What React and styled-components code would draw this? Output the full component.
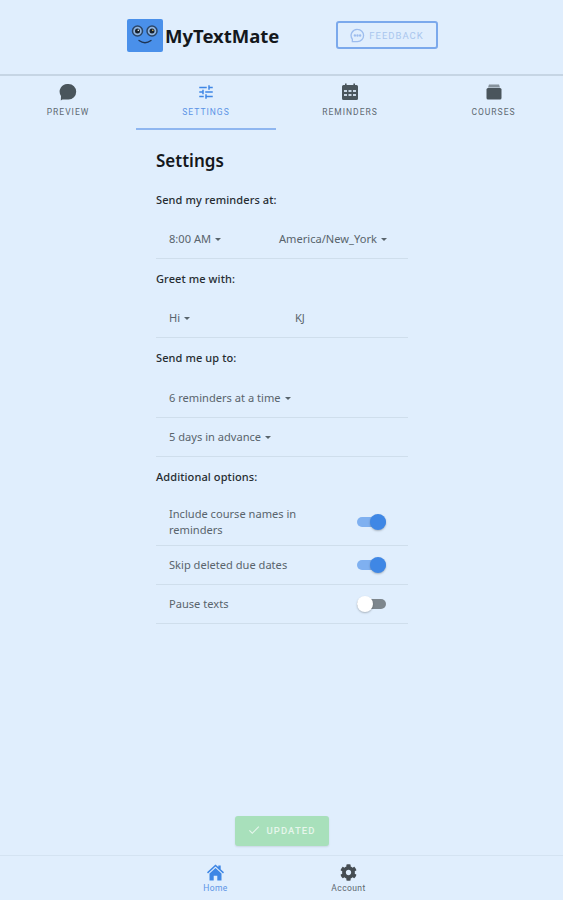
import styled, { createGlobalStyle } from "styled-components";
import { FaCog } from "react-icons/fa";
import { MdCheck, MdTune } from "react-icons/md";

const GlobalStyle = createGlobalStyle`
  * {
    box-sizing: border-box;
  }
  body {
    margin: 0;
    background: #e0eefd;
    font-family: "Noto Sans", sans-serif;
  }
`;

const Page = styled.div`
  min-height: 900px;
  display: flex;
  flex-direction: column;
  background: #e0eefd;
`;

const Header = styled.header`
  height: 76px;
  display: flex;
  align-items: center;
  padding: 0 0 4px 127px;
  border-bottom: 2px solid #c6d5e4;
`;

const Brand = styled.div`
  display: flex;
  align-items: center;
  gap: 2px;
  width: 209px;
`;

const BrandName = styled.span`
  font-family: "Noto Sans", sans-serif;
  font-size: 18.5px;
  font-weight: 700;
  color: #14181c;
`;

const FeedbackButton = styled.button`
  width: 102px;
  height: 28px;
  display: flex;
  align-items: center;
  justify-content: center;
  gap: 4px;
  padding: 0;
  background: transparent;
  border: 2px solid #7ba9ec;
  border-radius: 3px;
  color: #a9c6ee;
  font-family: "Roboto", sans-serif;
  font-size: 9.5px;
  font-weight: 400;
  letter-spacing: 1px;
`;

const Tabs = styled.nav`
  display: grid;
  grid-template-columns: 136px 140px 148px 139px;
  height: 54px;
`;

const Tab = styled.div`
  display: flex;
  flex-direction: column;
  align-items: center;
  padding-top: 7px;
  gap: 5px;
  color: ${(p) => (p.$active ? "#5b93e6" : "#5d6870")};
  border-bottom: 2px solid ${(p) => (p.$active ? "#8fb6f0" : "transparent")};
  svg {
    color: ${(p) => (p.$active ? "#3f87e5" : "#4a555c")};
  }
`;

const TabLabel = styled.span`
  font-family: "Roboto", sans-serif;
  font-size: 8.5px;
  font-weight: 400;
  letter-spacing: 1px;
  line-height: 12px;
`;

const Main = styled.main`
  flex: 1;
  width: 252px;
  margin-left: 156px;
  padding-top: 18px;
`;

const Title = styled.h1`
  margin: 0;
  height: 32px;
  font-size: 17px;
  line-height: 26px;
  font-weight: 600;
  color: #14181c;
`;

const SectionLabel = styled.div`
  height: ${(p) => p.$height || "40px"};
  display: flex;
  align-items: center;
  padding-bottom: 2px;
  font-size: 11px;
  font-weight: 500;
  letter-spacing: 0.1px;
  color: #262c31;
`;

const Row = styled.div`
  min-height: 39px;
  display: flex;
  align-items: center;
  padding: ${(p) => (p.$tall ? "9px 0 7px 13px" : "0 0 0 13px")};
  border-bottom: 1px solid #cfdeec;
  font-size: 11.1px;
  line-height: 16px;
  color: #59646c;
`;

const Select = styled.span`
  display: inline-flex;
  align-items: center;
  gap: 4px;
  width: ${(p) => p.$width || "auto"};
  &::after {
    content: "";
    border-left: 3.5px solid transparent;
    border-right: 3.5px solid transparent;
    border-top: 3.5px solid #59646c;
  }
`;

const OptionText = styled.span`
  flex: 1;
  padding-right: 40px;
`;

const SwitchTrack = styled.span`
  position: relative;
  width: 29px;
  height: 10px;
  margin-right: 22px;
  flex-shrink: 0;
  border-radius: 5px;
  background: ${(p) => (p.$on ? "#7fb0f0" : "#7d868d")};
`;

const SwitchThumb = styled.span`
  position: absolute;
  top: -3px;
  left: ${(p) => (p.$on ? "13px" : "0")};
  width: 16px;
  height: 16px;
  border-radius: 50%;
  background: ${(p) => (p.$on ? "#3f87e5" : "#ffffff")};
  box-shadow: 0 1px 2px rgba(0, 0, 0, 0.25);
`;

const SaveBar = styled.div`
  display: flex;
  justify-content: center;
  padding-bottom: 9px;
`;

const UpdatedButton = styled.button`
  width: 94px;
  height: 30px;
  display: flex;
  align-items: center;
  justify-content: center;
  gap: 5px;
  padding: 0 0 2px;
  border: none;
  border-radius: 3px;
  background: #a8e0bb;
  color: #e6f6ec;
  font-family: "Roboto", sans-serif;
  font-size: 9.5px;
  font-weight: 500;
  letter-spacing: 1.1px;
  box-shadow: 0 1px 2px rgba(0, 0, 0, 0.1);
`;

const BottomNav = styled.nav`
  height: 45px;
  display: grid;
  grid-template-columns: 133px 133px;
  padding-left: 149px;
  border-top: 1px solid #d4e3f2;
`;

const BottomItem = styled.div`
  display: flex;
  flex-direction: column;
  align-items: center;
  padding-top: 8px;
  color: ${(p) => (p.$active ? "#5b93e6" : "#5d6870")};
  svg {
    height: 17px;
    color: ${(p) => (p.$active ? "#3f87e5" : "#454c52")};
  }
`;

const BottomLabel = styled.span`
  font-family: "Roboto", sans-serif;
  font-size: 8.5px;
  font-weight: 400;
  letter-spacing: 0.4px;
  line-height: 12px;
  margin-top: 1px;
`;

const Logo = () => (
  <svg width="36" height="33" viewBox="0 0 36 33">
    <rect width="36" height="33" rx="2" fill="#4a90ea" />
    <circle cx="10.500" cy="12" r="5" fill="#8fb4e0" stroke="#2b4668" strokeWidth="1.500" />
    <circle cx="25" cy="12" r="5" fill="#8fb4e0" stroke="#2b4668" strokeWidth="1.500" />
    <circle cx="10.500" cy="12" r="2.500" fill="#16202c" />
    <circle cx="25" cy="12" r="2.500" fill="#16202c" />
    <circle cx="11.300" cy="11.200" r=".8" fill="#fff" />
    <circle cx="25.800" cy="11.200" r=".8" fill="#e8c060" />
    <path d="M12 21.500q6 4.500 12 0" fill="none" stroke="#1e3554" strokeWidth="1.300" strokeLinecap="round" />
  </svg>
);

const FeedbackIcon = () => (
  <svg width="15" height="15" viewBox="0 0 16 16" fill="none" stroke="#9dbdee" strokeWidth="1.400">
    <path d="M8 1.500a6.500 6.500 0 1 1 0 13H2.500v-2.600A6.500 6.500 0 0 1 8 1.500z" />
    <circle cx="5.200" cy="8" r=".6" fill="#9dbdee" />
    <circle cx="8" cy="8" r=".6" fill="#9dbdee" />
    <circle cx="10.800" cy="8" r=".6" fill="#9dbdee" />
  </svg>
);

const ChatIcon = () => (
  <svg width="18" height="18" viewBox="0 0 18 18" fill="currentColor">
    <path d="M9.500 1a7.700 7.700 0 0 1 0 15.400H3.400L1.800 17.500l.2-4.600A7.700 7.700 0 0 1 9.500 1z" />
  </svg>
);

const CalendarIcon = () => (
  <svg width="18" height="18" viewBox="0 0 18 18">
    <path fill="currentColor" d="M1 3.500A1.500 1.500 0 0 1 2.500 2H4V.6h1.600V2h6.800V.6H14V2h1.500A1.500 1.500 0 0 1 17 3.500v12a1.500 1.500 0 0 1-1.500 1.500h-13A1.500 1.500 0 0 1 1 15.500z" />
    <path fill="#e0eefd" opacity=".85" d="M3 7h3v2H3zM7.500 7h3v2h-3zM12 7h3v2h-3zM3 11h3v2H3zM7.500 11h3v2h-3zM12 11h3v2h-3z" />
  </svg>
);

const CoursesIcon = () => (
  <svg width="18" height="18" viewBox="0 0 18 18" fill="currentColor">
    <path opacity=".6" d="M4 1.500h10l1 3H3z" />
    <rect x="1.500" y="5" width="15" height="11.500" rx="1.500" />
  </svg>
);

const HomeIcon = () => (
  <svg width="17" height="17" viewBox="0 0 17 17" fill="currentColor">
    <path d="M8.500.5l2.800 2.500V1.500h2.400v3.700L17 8.300l-1 1.100-7.500-6.800L1 9.400 0 8.300z" />
    <path d="M2.500 9.500l6-5.400 6 5.400v7h-4.200v-4.800H6.700v4.800H2.500z" />
  </svg>
);

const Toggle = ({ on }) => (
  <SwitchTrack $on={on}>
    <SwitchThumb $on={on} />
  </SwitchTrack>
);

const App = () => {
  return (
    <Page>
      <GlobalStyle />
      <Header>
        <Brand>
          <Logo />
          <BrandName>MyTextMate</BrandName>
        </Brand>
        <FeedbackButton>
          <FeedbackIcon />
          FEEDBACK
        </FeedbackButton>
      </Header>
      <Tabs>
        <Tab>
          <ChatIcon />
          <TabLabel>PREVIEW</TabLabel>
        </Tab>
        <Tab $active>
          <MdTune size={18} />
          <TabLabel>SETTINGS</TabLabel>
        </Tab>
        <Tab>
          <CalendarIcon />
          <TabLabel>REMINDERS</TabLabel>
        </Tab>
        <Tab>
          <CoursesIcon />
          <TabLabel>COURSES</TabLabel>
        </Tab>
      </Tabs>
      <Main>
        <Title>Settings</Title>
        <SectionLabel>Send my reminders at:</SectionLabel>
        <Row>
          <Select $width="110px">8:00 AM</Select>
          <Select>America/New_York</Select>
        </Row>
        <SectionLabel>Greet me with:</SectionLabel>
        <Row>
          <Select $width="126px">Hi</Select>
          <span>KJ</span>
        </Row>
        <SectionLabel $height="41px">Send me up to:</SectionLabel>
        <Row>
          <Select>6 reminders at a time</Select>
        </Row>
        <Row>
          <Select>5 days in advance</Select>
        </Row>
        <SectionLabel>Additional options:</SectionLabel>
        <Row $tall>
          <OptionText>Include course names in reminders</OptionText>
          <Toggle on />
        </Row>
        <Row>
          <OptionText>Skip deleted due dates</OptionText>
          <Toggle on />
        </Row>
        <Row>
          <OptionText>Pause texts</OptionText>
          <Toggle />
        </Row>
      </Main>
      <SaveBar>
        <UpdatedButton>
          <MdCheck size={14} />
          UPDATED
        </UpdatedButton>
      </SaveBar>
      <BottomNav>
        <BottomItem $active>
          <HomeIcon />
          <BottomLabel>Home</BottomLabel>
        </BottomItem>
        <BottomItem>
          <FaCog size={17} />
          <BottomLabel>Account</BottomLabel>
        </BottomItem>
      </BottomNav>
    </Page>
  );
};

export default App;
